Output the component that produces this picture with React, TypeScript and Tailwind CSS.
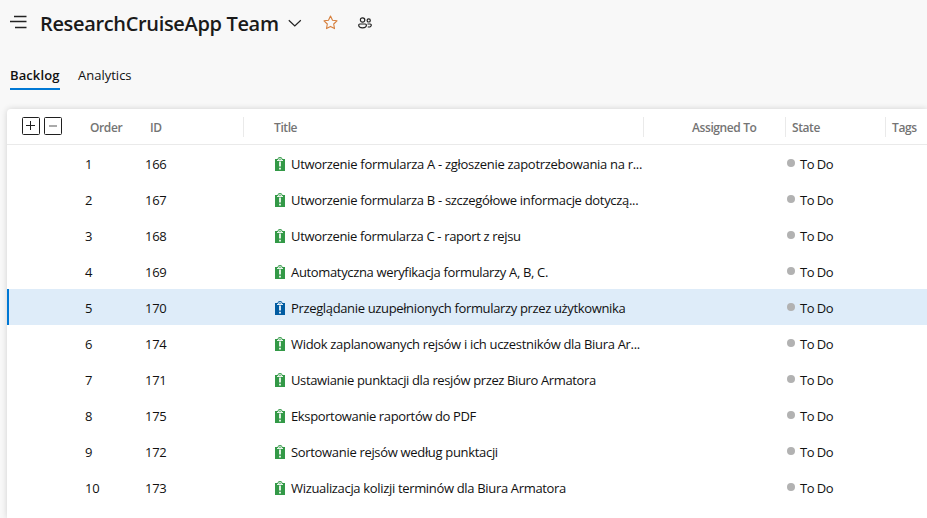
type Item = { order: number; id: number; title: string; tracking: string; selected?: boolean };

const items: Item[] = [
  { order: 1, id: 166, title: "Utworzenie formularza A - zgłoszenie zapotrzebowania na r...", tracking: "tracking-[-0.3px]" },
  { order: 2, id: 167, title: "Utworzenie formularza B - szczegółowe informacje dotyczą...", tracking: "tracking-[-0.31px]" },
  { order: 3, id: 168, title: "Utworzenie formularza C - raport z rejsu", tracking: "tracking-[-0.33px]" },
  { order: 4, id: 169, title: "Automatyczna weryfikacja formularzy A, B, C.", tracking: "tracking-[-0.34px]" },
  { order: 5, id: 170, title: "Przeglądanie uzupełnionych formularzy przez użytkownika", tracking: "tracking-[-0.35px]", selected: true },
  { order: 6, id: 174, title: "Widok zaplanowanych rejsów i ich uczestników dla Biura Ar...", tracking: "tracking-[-0.32px]" },
  { order: 7, id: 171, title: "Ustawianie punktacji dla resjów przez Biuro Armatora", tracking: "tracking-[-0.37px]" },
  { order: 8, id: 175, title: "Eksportowanie raportów do PDF", tracking: "tracking-[-0.37px]" },
  { order: 9, id: 172, title: "Sortowanie rejsów według punktacji", tracking: "tracking-[-0.32px]" },
  { order: 10, id: 173, title: "Wizualizacja kolizji terminów dla Biura Armatora", tracking: "tracking-[-0.33px]" },
];

const columns = "grid grid-cols-[78px_59px_100px_400px_142px_100px_1fr]";

function BacklogIcon({ selected }: { selected?: boolean }) {
  return (
    <svg className={`mt-px shrink-0 ${selected ? "text-[#005ba1]" : "text-[#339947]"}`} width="10" height="14" viewBox="0 0 10 14" fill="none">
      <path d="M0 2h2.500C2.700.700 3.700 0 5 0s2.300.700 2.500 2H10V14H0z" fill="currentColor" />
      <path d="M2 3.500h6M3.700 3V1.800h2.600V3" stroke="#fff" strokeWidth="0.900" />
      <path d="M5 4.500v5M5 10.800v1.700" stroke="#fff" strokeWidth="1.700" />
    </svg>
  );
}

function Header() {
  return (
    <header className="flex h-[46px] items-center pl-[10px]">
      <svg className="mb-[2px]" width="17" height="14" viewBox="0 0 17 14" fill="none" stroke="#222" strokeWidth="1.4">
        <path d="M4 1.500h12.500M0 6.500h16.500M5 12.500h11.500" />
      </svg>
      <h1 className="ml-[13px] w-[239px] whitespace-nowrap pt-px text-[20px] font-semibold tracking-[-0.34px] text-[#1a1a1a]">
        ResearchCruiseApp Team
      </h1>
      <svg className="ml-[9px]" width="14" height="8" viewBox="0 0 14 8" fill="none" stroke="#222" strokeWidth="1.2">
        <path d="M0.800 1.200 6.800 7 12.800 1.200" />
      </svg>
      <svg className="ml-[21px] mb-[2px]" width="15" height="15" viewBox="0 0 15 15" fill="none" stroke="#d67f3c" strokeWidth="1.100" strokeLinejoin="round">
        <path d="m7.500 1 2 4.200 4.500.600-3.300 3.200.8 4.600-4-2.200-4 2.200.8-4.600L1 5.800l4.500-.6z" />
      </svg>
      <svg className="ml-[20px] mb-px" width="14" height="12" viewBox="0 0 14 12" fill="none" stroke="#222" strokeWidth="1.200">
        <circle cx="4.600" cy="3" r="2.200" />
        <circle cx="10.700" cy="3.400" r="1.600" />
        <path d="M1.900 7h5.300c.8 0 1.200.5 1.200 1.100 0 1.800-1.500 2.800-3.800 2.800S.7 9.900.7 8.100C.7 7.500 1.100 7 1.900 7z" />
        <path d="M9.500 7h2.700c.7 0 1.100.4 1.100 1 0 1.500-1.500 2.300-3.500 1.900" />
      </svg>
    </header>
  );
}

export default function App() {
  return (
    <div className="flex h-[518px] w-full flex-col overflow-hidden bg-[#f8f8f8] font-['Open_Sans','Noto_Sans',sans-serif] text-[13px] text-[#111]">
      <Header />
      <nav className="flex h-[63px] pt-[18px] pl-[10px]">
        <div className="h-[26px] w-[50px] whitespace-nowrap border-b-2 border-[#0078d4] leading-[22px] font-semibold tracking-[0.1px]">
          Backlog
        </div>
        <div className="ml-[18px] h-[26px] leading-[22px]">Analytics</div>
      </nav>
      <main className="ml-[7px] flex-1 rounded-tl-[4px] bg-white shadow-[0_0_6px_rgba(0,0,0,0.16)]">
        <div className={`${columns} h-9 items-center border-b border-[#eaeaea] text-[12px] font-semibold tracking-[-0.4px] text-[#747474]`}>
          <div className="flex gap-1 pb-[2px] pl-[15px]">
            <svg width="18" height="18" viewBox="0 0 18 18" fill="none" stroke="#1f1f1f">
              <rect x="0.5" y="0.5" width="17" height="17" rx="1" />
              <path d="M4 8.500h9M8.500 4v9" />
            </svg>
            <svg width="18" height="18" viewBox="0 0 18 18" fill="none" stroke="#1f1f1f">
              <rect x="0.5" y="0.5" width="17" height="17" rx="1" />
              <path d="M5 9h8" stroke="#aaa" strokeWidth="2" />
            </svg>
          </div>
          <div className="pt-[2px] pl-[5px]">Order</div>
          <div className="flex h-5 items-center border-r border-[#eaeaea] pt-[2px] pl-[6px]">ID</div>
          <div className="flex h-5 items-center border-r border-[#eaeaea] pt-[2px] pl-[30px]">Title</div>
          <div className="flex h-5 items-center border-r border-[#eaeaea] pt-[2px] pl-[48px]">Assigned To</div>
          <div className="flex h-5 items-center border-r border-[#eaeaea] pt-[2px] pl-[6px]">State</div>
          <div className="pt-[2px] pl-[6px]">Tags</div>
        </div>
        {items.map((item) => (
          <div
            key={item.id}
            className={`${columns} h-9 items-center ${item.selected ? "bg-[#deecf9] shadow-[inset_2px_0_0_#0078d4]" : ""}`}
          >
            <div />
            <div className="pt-[3px] tracking-[-0.3px]">{item.order}</div>
            <div className="pt-[3px] pl-px tracking-[-0.3px]">{item.id}</div>
            <div className="flex items-center gap-[6px] pl-[31px]">
              <BacklogIcon selected={item.selected} />
              <span className={`whitespace-nowrap pt-[3px] ${item.tracking}`}>{item.title}</span>
            </div>
            <div />
            <div className="flex items-center gap-[5px] pl-px">
              <span className="mb-px size-2 rounded-full bg-[#b2b2b2]" />
              <span className="pt-[3px] tracking-[-0.5px]">To Do</span>
            </div>
            <div />
          </div>
        ))}
      </main>
    </div>
  );
}
